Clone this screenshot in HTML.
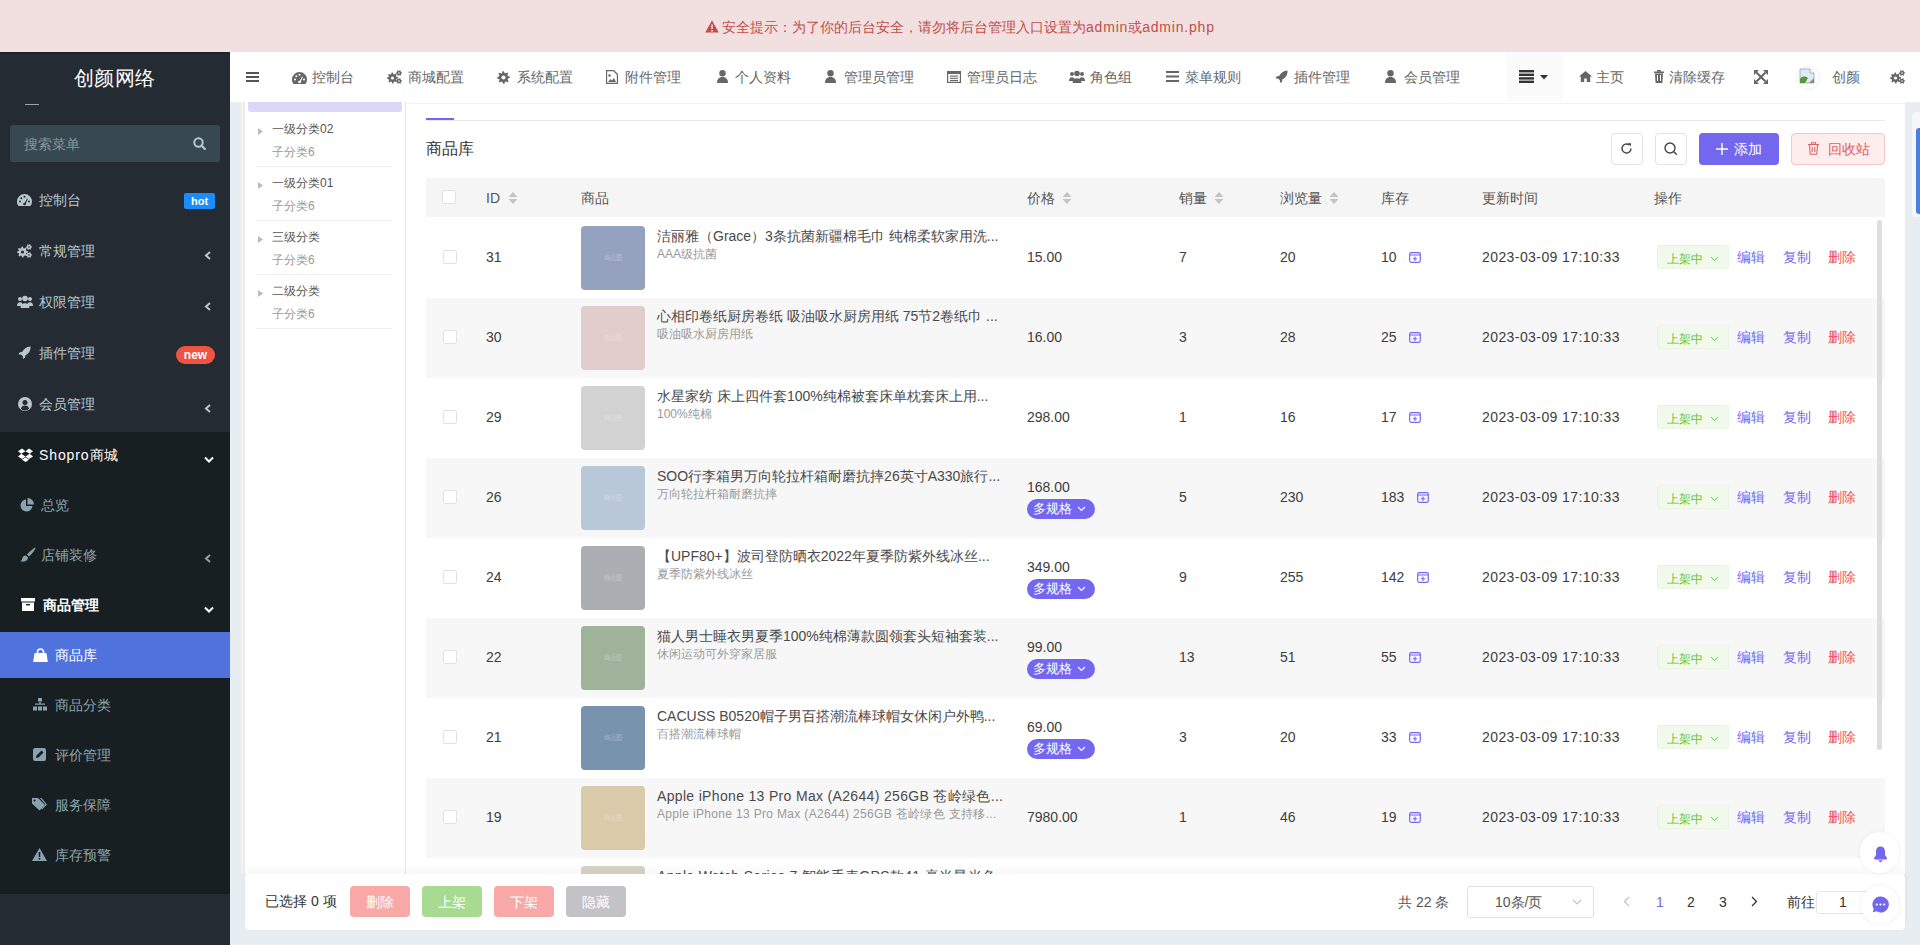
<!DOCTYPE html>
<html><head><meta charset="utf-8"><title>商品库</title>
<style>
*{box-sizing:border-box;margin:0;padding:0}
html,body{width:1920px;height:945px;overflow:hidden}
body{font-family:"Liberation Sans",sans-serif;font-size:14px;color:#333;background:#e8edf1;position:relative}
.abs{position:absolute}
.t{white-space:nowrap}
</style></head><body>
<div class="abs" style="left:0px;top:0px;width:1920px;height:52px;background:#f2dfdf"></div>
<svg class="abs" style="left:705px;top:20px;" width="14" height="13" viewBox="0 0 14 13" fill="#bf4f4d"><path d="M7 .5L13.8 12.5H.2z"/><rect x="6.2" y="4.5" width="1.6" height="4.5" fill="#f2dede"/><rect x="6.2" y="10" width="1.6" height="1.6" fill="#f2dede"/></svg>
<div class="abs t " style="left:722px;top:16.5px;line-height:20px;font-size:14px;color:#bf4f4d;">安全提示：为了你的后台安全，请勿将后台管理入口设置为<span style="letter-spacing:.8px">admin</span>或<span style="letter-spacing:.8px">admin.php</span></div>
<div class="abs" style="left:0px;top:52px;width:230px;height:893px;background:#252b32"></div>
<div class="abs" style="left:0px;top:52px;width:230px;height:2px;background:#1d2427"></div>
<div class="abs" style="left:0px;top:432px;width:230px;height:462px;background:#181f22"></div>
<div class="abs t " style="left:74px;top:65.0px;line-height:26px;font-size:20px;color:#fff;letter-spacing:0.3px">创颜网络</div>
<div class="abs" style="left:25px;top:104px;width:14px;height:1px;background:#9aa3a8"></div>
<div class="abs" style="left:10px;top:125px;width:210px;height:37px;background:#374850;border-radius:3px"></div>
<div class="abs t " style="left:24px;top:134.0px;line-height:20px;font-size:14px;color:#8a979d;">搜索菜单</div>
<svg class="abs" style="left:193px;top:137px" width="13" height="13" viewBox="0 0 13 13"><circle cx="5.5" cy="5.5" r="4.2" stroke="#b8c7ce" stroke-width="2" fill="none"/><path d="M8.5 8.5l3.5 3.5" stroke="#b8c7ce" stroke-width="2.2" stroke-linecap="round"/></svg>
<svg class="abs" style="left:17px;top:194px" width="15" height="12" viewBox="0 0 15 12"><path d="M7.5 0A7.5 7.5 0 0 0 0 7.5c0 1.7.6 3.3 1.6 4.5h11.8c1-1.2 1.6-2.8 1.6-4.5A7.5 7.5 0 0 0 7.5 0z" fill="#b8c7ce"/><circle cx="3" cy="7.5" r="1" fill="#252b32"/><circle cx="4.3" cy="4.2" r="1" fill="#252b32"/><circle cx="7.5" cy="2.8" r="1" fill="#252b32"/><circle cx="12" cy="7.5" r="1" fill="#252b32"/><path d="M7 10.5l3-6 .8.4-2.5 6.2z" fill="#252b32"/><circle cx="7.5" cy="10" r="1.3" fill="#252b32"/></svg>
<div class="abs t " style="left:39px;top:190.0px;line-height:20px;font-size:14px;color:#b8c7ce;">控制台</div>
<div class="abs" style="left:184px;top:193px;width:31px;height:16px;background:#1a8dfb;border-radius:2px"></div>
<div class="abs t " style="left:184px;top:192.5px;line-height:16px;font-size:11px;color:#fff;width:31px;text-align:center;font-weight:bold">hot</div>
<svg class="abs" style="left:17px;top:244px" width="15.0" height="14.0" viewBox="0 0 15 14"><path d="M10.94,7.19 L10.99,8.27 L9.34,8.96 L9.08,9.69 L9.92,11.28 L9.19,12.08 L7.54,11.40 L6.83,11.73 L6.31,13.44 L5.23,13.49 L4.54,11.84 L3.81,11.58 L2.22,12.42 L1.42,11.69 L2.10,10.04 L1.77,9.33 L0.06,8.81 L0.01,7.73 L1.66,7.04 L1.92,6.31 L1.08,4.72 L1.81,3.92 L3.46,4.60 L4.17,4.27 L4.69,2.56 L5.77,2.51 L6.46,4.16 L7.19,4.42 L8.78,3.58 L9.58,4.31 L8.90,5.96 L9.23,6.67Z" fill="#b8c7ce"/><circle cx="5.5" cy="8" r="1.6" fill="#252b32"/><path d="M14.94,2.41 L14.99,3.20 L14.05,3.69 L13.80,4.20 L13.98,5.26 L13.33,5.69 L12.42,5.12 L11.86,5.16 L11.04,5.84 L10.33,5.49 L10.38,4.42 L10.06,3.96 L9.06,3.59 L9.01,2.80 L9.95,2.31 L10.20,1.80 L10.02,0.74 L10.67,0.31 L11.58,0.88 L12.14,0.84 L12.96,0.16 L13.67,0.51 L13.62,1.58 L13.94,2.04Z" fill="#b8c7ce"/><circle cx="12" cy="3" r=".8" fill="#252b32"/><path d="M14.94,10.41 L14.99,11.20 L14.05,11.69 L13.80,12.20 L13.98,13.26 L13.33,13.69 L12.42,13.12 L11.86,13.16 L11.04,13.84 L10.33,13.49 L10.38,12.42 L10.06,11.96 L9.06,11.59 L9.01,10.80 L9.95,10.31 L10.20,9.80 L10.02,8.74 L10.67,8.31 L11.58,8.88 L12.14,8.84 L12.96,8.16 L13.67,8.51 L13.62,9.58 L13.94,10.04Z" fill="#b8c7ce"/><circle cx="12" cy="11" r=".8" fill="#252b32"/></svg>
<div class="abs t " style="left:39px;top:241.0px;line-height:20px;font-size:14px;color:#b8c7ce;">常规管理</div>
<svg class="abs" style="left:204px;top:250.5px" width="8" height="9" viewBox="0 0 8 9"><path d="M6 1L2 4.5 6 8" stroke="#b8c7ce" stroke-width="2" fill="none"/></svg>
<svg class="abs" style="left:17px;top:295px" width="16" height="13" viewBox="0 0 16 13"><circle cx="8" cy="3.5" r="2.8" fill="#b8c7ce"/><circle cx="3" cy="4" r="2" fill="#b8c7ce"/><circle cx="13" cy="4" r="2" fill="#b8c7ce"/><path d="M3.5 13c0-3 2-4.8 4.5-4.8s4.5 1.8 4.5 4.8z" fill="#b8c7ce"/><path d="M0 11c0-2.5 1.2-3.8 3-3.8s3 1.3 3 3.8z" fill="#b8c7ce"/><path d="M10 11c0-2.5 1.2-3.8 3-3.8s3 1.3 3 3.8z" fill="#b8c7ce"/></svg>
<div class="abs t " style="left:39px;top:292.0px;line-height:20px;font-size:14px;color:#b8c7ce;">权限管理</div>
<svg class="abs" style="left:204px;top:301.5px" width="8" height="9" viewBox="0 0 8 9"><path d="M6 1L2 4.5 6 8" stroke="#b8c7ce" stroke-width="2" fill="none"/></svg>
<svg class="abs" style="left:18px;top:346px" width="13" height="13" viewBox="0 0 14 14"><path d="M13.5.5C9 .8 6 3.5 4.5 6.5L2 6.8.5 9l3 .3 1.7 1.7.3 3 2.2-1.5.3-2.5C11 8.5 13.7 5.5 13.5.5z" fill="#b8c7ce"/></svg>
<div class="abs t " style="left:39px;top:343.0px;line-height:20px;font-size:14px;color:#b8c7ce;">插件管理</div>
<div class="abs" style="left:176px;top:346px;width:39px;height:18px;background:#f0533f;border-radius:9px"></div>
<div class="abs t " style="left:176px;top:346.0px;line-height:18px;font-size:12px;color:#fff;width:39px;text-align:center;font-weight:bold">new</div>
<svg class="abs" style="left:18px;top:397px" width="14" height="14" viewBox="0 0 14 14"><circle cx="7" cy="7" r="7" fill="#b8c7ce"/><circle cx="7" cy="5.5" r="2.5" fill="#252b32"/><path d="M2.8 11.5c.8-2 2.3-3 4.2-3s3.4 1 4.2 3A5.5 5.5 0 0 1 2.8 11.5z" fill="#252b32"/></svg>
<div class="abs t " style="left:39px;top:394.0px;line-height:20px;font-size:14px;color:#b8c7ce;">会员管理</div>
<svg class="abs" style="left:204px;top:403.5px" width="8" height="9" viewBox="0 0 8 9"><path d="M6 1L2 4.5 6 8" stroke="#b8c7ce" stroke-width="2" fill="none"/></svg>
<svg class="abs" style="left:18px;top:448px" width="15" height="14" viewBox="0 0 15 14"><path d="M4 .5L0 3.2l3.3 2.6L7.5 3.2zM11 .5l4 2.7-3.3 2.6L7.5 3.2zM0 8.4l4 2.6 3.5-2.6-4.2-2.6zM15 8.4l-4 2.6-3.5-2.6 4.2-2.6zM4 11.8l3.5 2.2 3.5-2.2-3.5-2.5z" fill="#fff"/></svg>
<div class="abs t " style="left:39px;top:445.0px;line-height:20px;font-size:14px;color:#fff;"><span style="letter-spacing:.9px">Shopro</span>商城</div>
<svg class="abs" style="left:204px;top:456px" width="10" height="7" viewBox="0 0 10 7"><path d="M1 1.5l4 4 4-4" stroke="#fff" stroke-width="2" fill="none"/></svg>
<svg class="abs" style="left:20px;top:498px" width="14" height="14" viewBox="0 0 14 14"><path d="M6 1.5A6 6 0 1 0 12.5 8H6z" fill="#8aa4af"/><path d="M7.5 0v6.5H14A6.5 6.5 0 0 0 7.5 0z" fill="#8aa4af"/></svg>
<div class="abs t " style="left:41px;top:495.0px;line-height:20px;font-size:14px;color:#8aa4af;">总览</div>
<svg class="abs" style="left:20px;top:547px" width="16" height="15" viewBox="0 0 16 15"><path d="M15.5.5c-1.5.2-6.5 4.5-8.5 7l2 2c2.5-2 6.5-7 6.5-9z" fill="#8aa4af"/><path d="M6 8.5c-2.5 0-3.5 1.5-3.8 3.2C2 13 1.2 13.8.3 14.3c3 .8 7.2.2 7.7-3.8z" fill="#8aa4af"/></svg>
<div class="abs t " style="left:41px;top:545.0px;line-height:20px;font-size:14px;color:#8aa4af;">店铺装修</div>
<svg class="abs" style="left:204px;top:553.5px" width="8" height="9" viewBox="0 0 8 9"><path d="M6 1L2 4.5 6 8" stroke="#8aa4af" stroke-width="2" fill="none"/></svg>
<svg class="abs" style="left:21px;top:598px" width="14" height="13" viewBox="0 0 14 13"><rect x="0" y="0" width="14" height="3.5" fill="#fff"/><rect x="1" y="4.5" width="12" height="8.5" fill="#fff"/><rect x="5" y="6" width="4" height="1.4" fill="#1a2226"/></svg>
<div class="abs t " style="left:43px;top:595.0px;line-height:20px;font-size:14px;color:#fff;font-weight:bold">商品管理</div>
<svg class="abs" style="left:204px;top:606px" width="10" height="7" viewBox="0 0 10 7"><path d="M1 1.5l4 4 4-4" stroke="#fff" stroke-width="2" fill="none"/></svg>
<div class="abs" style="left:0px;top:632px;width:230px;height:46px;background:#4f72dd"></div>
<svg class="abs" style="left:33px;top:648px" width="15" height="14" viewBox="0 0 15 14"><path d="M1.5 5h12l1.3 9H.2z" fill="#fff"/><path d="M4.5 6V4a3 3 0 0 1 6 0v2" stroke="#fff" stroke-width="1.6" fill="none"/></svg>
<div class="abs t " style="left:55px;top:645.0px;line-height:20px;font-size:14px;color:#fff;">商品库</div>
<svg class="abs" style="left:33px;top:698px" width="14" height="13" viewBox="0 0 14 13"><rect x="5" y="0" width="4" height="3.5" fill="#8aa4af"/><rect x="6.4" y="3.5" width="1.2" height="2.5" fill="#8aa4af"/><rect x="2" y="5.5" width="10" height="1.2" fill="#8aa4af"/><rect x="0" y="8.5" width="4" height="4" fill="#8aa4af"/><rect x="5" y="8.5" width="4" height="4" fill="#8aa4af"/><rect x="10" y="8.5" width="4" height="4" fill="#8aa4af"/></svg>
<div class="abs t " style="left:55px;top:695.0px;line-height:20px;font-size:14px;color:#8aa4af;">商品分类</div>
<svg class="abs" style="left:33px;top:748px" width="13" height="13" viewBox="0 0 13 13"><rect x="0" y="0" width="13" height="13" rx="2" fill="#8aa4af"/><path d="M3 10l.5-2.5L8.5 2.5 10.5 4.5 5.5 9.5z" fill="#181f22"/></svg>
<div class="abs t " style="left:55px;top:745.0px;line-height:20px;font-size:14px;color:#8aa4af;">评价管理</div>
<svg class="abs" style="left:32px;top:798px" width="15" height="13" viewBox="0 0 15 13"><path d="M0 0h6l7 7-5.5 5.5L0 5.5z" fill="#8aa4af"/><circle cx="2.5" cy="2.5" r="1.1" fill="#181f22"/><path d="M8 0h1.5l5.5 6.5-5 5-.8-.8L13.5 6.5z" fill="#8aa4af"/></svg>
<div class="abs t " style="left:55px;top:795.0px;line-height:20px;font-size:14px;color:#8aa4af;">服务保障</div>
<svg class="abs" style="left:32px;top:848px" width="15" height="13" viewBox="0 0 15 13"><path d="M7.5 0L15 13H0z" fill="#8aa4af"/><rect x="6.7" y="4" width="1.6" height="5" fill="#181f22"/><rect x="6.7" y="10" width="1.6" height="1.6" fill="#181f22"/></svg>
<div class="abs t " style="left:55px;top:845.0px;line-height:20px;font-size:14px;color:#8aa4af;">库存预警</div>
<div class="abs" style="left:230px;top:52px;width:1690px;height:50px;background:#fff"></div>
<svg class="abs" style="left:246px;top:72px;" width="13" height="10" viewBox="0 0 13 10" fill="#555"><rect x="0" y="0" width="13" height="2"/><rect x="0" y="4" width="13" height="2"/><rect x="0" y="8" width="13" height="2"/></svg>
<svg class="abs" style="left:292px;top:72px" width="15" height="12" viewBox="0 0 15 12"><path d="M7.5 0A7.5 7.5 0 0 0 0 7.5c0 1.7.6 3.3 1.6 4.5h11.8c1-1.2 1.6-2.8 1.6-4.5A7.5 7.5 0 0 0 7.5 0z" fill="#666"/><circle cx="3" cy="7.5" r="1" fill="#fff"/><circle cx="4.3" cy="4.2" r="1" fill="#fff"/><circle cx="7.5" cy="2.8" r="1" fill="#fff"/><circle cx="12" cy="7.5" r="1" fill="#fff"/><path d="M7 10.5l3-6 .8.4-2.5 6.2z" fill="#fff"/><circle cx="7.5" cy="10" r="1.3" fill="#fff"/></svg>
<div class="abs t " style="left:312px;top:67.0px;line-height:20px;font-size:14px;color:#666;">控制台</div>
<svg class="abs" style="left:387px;top:70px" width="15.0" height="14.0" viewBox="0 0 15 14"><path d="M10.94,7.19 L10.99,8.27 L9.34,8.96 L9.08,9.69 L9.92,11.28 L9.19,12.08 L7.54,11.40 L6.83,11.73 L6.31,13.44 L5.23,13.49 L4.54,11.84 L3.81,11.58 L2.22,12.42 L1.42,11.69 L2.10,10.04 L1.77,9.33 L0.06,8.81 L0.01,7.73 L1.66,7.04 L1.92,6.31 L1.08,4.72 L1.81,3.92 L3.46,4.60 L4.17,4.27 L4.69,2.56 L5.77,2.51 L6.46,4.16 L7.19,4.42 L8.78,3.58 L9.58,4.31 L8.90,5.96 L9.23,6.67Z" fill="#666"/><circle cx="5.5" cy="8" r="1.6" fill="#fff"/><path d="M14.94,2.41 L14.99,3.20 L14.05,3.69 L13.80,4.20 L13.98,5.26 L13.33,5.69 L12.42,5.12 L11.86,5.16 L11.04,5.84 L10.33,5.49 L10.38,4.42 L10.06,3.96 L9.06,3.59 L9.01,2.80 L9.95,2.31 L10.20,1.80 L10.02,0.74 L10.67,0.31 L11.58,0.88 L12.14,0.84 L12.96,0.16 L13.67,0.51 L13.62,1.58 L13.94,2.04Z" fill="#666"/><circle cx="12" cy="3" r=".8" fill="#fff"/><path d="M14.94,10.41 L14.99,11.20 L14.05,11.69 L13.80,12.20 L13.98,13.26 L13.33,13.69 L12.42,13.12 L11.86,13.16 L11.04,13.84 L10.33,13.49 L10.38,12.42 L10.06,11.96 L9.06,11.59 L9.01,10.80 L9.95,10.31 L10.20,9.80 L10.02,8.74 L10.67,8.31 L11.58,8.88 L12.14,8.84 L12.96,8.16 L13.67,8.51 L13.62,9.58 L13.94,10.04Z" fill="#666"/><circle cx="12" cy="11" r=".8" fill="#fff"/></svg>
<div class="abs t " style="left:408px;top:67.0px;line-height:20px;font-size:14px;color:#666;">商城配置</div>
<svg class="abs" style="left:497px;top:71px" width="13" height="13" viewBox="0 0 14 14"><path d="M13.73,6.00 L13.79,7.33 L11.75,8.19 L11.43,9.09 L12.46,11.05 L11.57,12.04 L9.52,11.20 L8.65,11.61 L8.00,13.73 L6.67,13.79 L5.81,11.75 L4.91,11.43 L2.95,12.46 L1.96,11.57 L2.80,9.52 L2.39,8.65 L0.27,8.00 L0.21,6.67 L2.25,5.81 L2.57,4.91 L1.54,2.95 L2.43,1.96 L4.48,2.80 L5.35,2.39 L6.00,0.27 L7.33,0.21 L8.19,2.25 L9.09,2.57 L11.05,1.54 L12.04,2.43 L11.20,4.48 L11.61,5.35Z" fill="#666"/><circle cx="7" cy="7" r="2.2" fill="#fff"/></svg>
<div class="abs t " style="left:517px;top:67.0px;line-height:20px;font-size:14px;color:#666;">系统配置</div>
<svg class="abs" style="left:606px;top:70px" width="12" height="14" viewBox="0 0 12 14"><path d="M.5.5h7l4 4v9H.5z" fill="none" stroke="#666" stroke-width="1.3"/><path d="M2 12l2.5-3 1.5 1.5 2-2.5 2 4z" fill="#666"/><circle cx="3.5" cy="5.5" r="1.2" fill="#666"/></svg>
<div class="abs t " style="left:625px;top:67.0px;line-height:20px;font-size:14px;color:#666;">附件管理</div>
<svg class="abs" style="left:717px;top:70px" width="11" height="13" viewBox="0 0 11 13"><circle cx="5.5" cy="3.3" r="3.2" fill="#666"/><path d="M0 13c0-3.6 1.8-6 5.5-6S11 9.4 11 13z" fill="#666"/></svg>
<div class="abs t " style="left:735px;top:67.0px;line-height:20px;font-size:14px;color:#666;">个人资料</div>
<svg class="abs" style="left:825px;top:70px" width="11" height="13" viewBox="0 0 11 13"><circle cx="5.5" cy="3.3" r="3.2" fill="#666"/><path d="M0 13c0-3.6 1.8-6 5.5-6S11 9.4 11 13z" fill="#666"/></svg>
<div class="abs t " style="left:844px;top:67.0px;line-height:20px;font-size:14px;color:#666;">管理员管理</div>
<svg class="abs" style="left:947px;top:71px" width="14" height="12" viewBox="0 0 14 12"><rect x=".6" y=".6" width="12.8" height="10.8" fill="none" stroke="#666" stroke-width="1.2"/><rect x="1" y="1" width="12" height="2" fill="#666"/><rect x="3" y="4.5" width="8" height="1.1" fill="#666"/><rect x="3" y="6.7" width="8" height="1.1" fill="#666"/><rect x="3" y="8.9" width="8" height="1.1" fill="#666"/></svg>
<div class="abs t " style="left:967px;top:67.0px;line-height:20px;font-size:14px;color:#666;">管理员日志</div>
<svg class="abs" style="left:1069px;top:70px" width="16" height="13" viewBox="0 0 16 13"><circle cx="8" cy="3.5" r="2.8" fill="#666"/><circle cx="3" cy="4" r="2" fill="#666"/><circle cx="13" cy="4" r="2" fill="#666"/><path d="M3.5 13c0-3 2-4.8 4.5-4.8s4.5 1.8 4.5 4.8z" fill="#666"/><path d="M0 11c0-2.5 1.2-3.8 3-3.8s3 1.3 3 3.8z" fill="#666"/><path d="M10 11c0-2.5 1.2-3.8 3-3.8s3 1.3 3 3.8z" fill="#666"/></svg>
<div class="abs t " style="left:1090px;top:67.0px;line-height:20px;font-size:14px;color:#666;">角色组</div>
<svg class="abs" style="left:1166px;top:71px;" width="13" height="11" viewBox="0 0 13 11" fill="#666"><rect x="0" y="0" width="13" height="2"/><rect x="0" y="4.5" width="13" height="2"/><rect x="0" y="9" width="13" height="2"/></svg>
<div class="abs t " style="left:1185px;top:67.0px;line-height:20px;font-size:14px;color:#666;">菜单规则</div>
<svg class="abs" style="left:1275px;top:70px" width="13" height="13" viewBox="0 0 14 14"><path d="M13.5.5C9 .8 6 3.5 4.5 6.5L2 6.8.5 9l3 .3 1.7 1.7.3 3 2.2-1.5.3-2.5C11 8.5 13.7 5.5 13.5.5z" fill="#666"/></svg>
<div class="abs t " style="left:1294px;top:67.0px;line-height:20px;font-size:14px;color:#666;">插件管理</div>
<svg class="abs" style="left:1385px;top:70px" width="11" height="13" viewBox="0 0 11 13"><circle cx="5.5" cy="3.3" r="3.2" fill="#666"/><path d="M0 13c0-3.6 1.8-6 5.5-6S11 9.4 11 13z" fill="#666"/></svg>
<div class="abs t " style="left:1404px;top:67.0px;line-height:20px;font-size:14px;color:#666;">会员管理</div>
<div class="abs" style="left:1507px;top:53px;width:56px;height:47px;background:#fbfbfb"></div>
<svg class="abs" style="left:1519px;top:70px;" width="15" height="13" viewBox="0 0 15 13" fill="#333"><rect x="0" y="0" width="15" height="2.4"/><rect x="0" y="3.6" width="15" height="2.4"/><rect x="0" y="7.2" width="15" height="2.4"/><rect x="0" y="10.6" width="15" height="2.4"/></svg>
<svg class="abs" style="left:1540px;top:75px;" width="8" height="5" viewBox="0 0 8 5" fill="#333"><path d="M0 0h8L4 4.5z"/></svg>
<svg class="abs" style="left:1579px;top:71px" width="13" height="11" viewBox="0 0 13 11"><path d="M6.5 0L0 5.5h1.8V11h3.4V7.5h2.6V11h3.4V5.5H13z" fill="#666"/></svg>
<div class="abs t " style="left:1596px;top:67.0px;line-height:20px;font-size:14px;color:#666;">主页</div>
<svg class="abs" style="left:1654px;top:70px" width="10" height="13" viewBox="0 0 10 13"><rect x="0" y="1.5" width="10" height="1.6" fill="#666"/><rect x="3" y="0" width="4" height="1.6" fill="#666"/><path d="M1 3.5h8l-.6 9.5H1.6z" fill="#666"/><rect x="3" y="5" width="1" height="6" fill="#fff"/><rect x="6" y="5" width="1" height="6" fill="#fff"/></svg>
<div class="abs t " style="left:1669px;top:67.0px;line-height:20px;font-size:14px;color:#666;">清除缓存</div>
<svg class="abs" style="left:1754px;top:70px" width="14" height="14" viewBox="0 0 14 14"><path d="M2.5 2.5l9 9M11.5 2.5l-9 9" stroke="#666" stroke-width="2"/><path d="M0 0h5L0 5zM14 0v5L9 0zM0 14V9l5 5zM14 14H9l5-5z" fill="#666"/></svg>
<div class="abs" style="left:1796px;top:66px;width:24px;height:24px;border-radius:50%;border:1px solid #f0f0f0"></div>
<svg class="abs" style="left:1799px;top:68px" width="16" height="16" viewBox="0 0 16 16"><path d="M1 1h10l4 4v10H1z" fill="#dfe9f5" stroke="#9aa5b0" stroke-width=".8"/><path d="M1 15V11c2-3 5-3 8-1l-3 5z" fill="#4f9a3a"/><path d="M11 1v4h4" fill="#fff" stroke="#9aa5b0" stroke-width=".8"/><path d="M10 15l5-5v5z" fill="#888"/></svg>
<div class="abs t " style="left:1832px;top:67.0px;line-height:20px;font-size:14px;color:#666;">创颜</div>
<svg class="abs" style="left:1890px;top:70px" width="15.0" height="14.0" viewBox="0 0 15 14"><path d="M10.94,7.19 L10.99,8.27 L9.34,8.96 L9.08,9.69 L9.92,11.28 L9.19,12.08 L7.54,11.40 L6.83,11.73 L6.31,13.44 L5.23,13.49 L4.54,11.84 L3.81,11.58 L2.22,12.42 L1.42,11.69 L2.10,10.04 L1.77,9.33 L0.06,8.81 L0.01,7.73 L1.66,7.04 L1.92,6.31 L1.08,4.72 L1.81,3.92 L3.46,4.60 L4.17,4.27 L4.69,2.56 L5.77,2.51 L6.46,4.16 L7.19,4.42 L8.78,3.58 L9.58,4.31 L8.90,5.96 L9.23,6.67Z" fill="#666"/><circle cx="5.5" cy="8" r="1.6" fill="#fff"/><path d="M14.94,2.41 L14.99,3.20 L14.05,3.69 L13.80,4.20 L13.98,5.26 L13.33,5.69 L12.42,5.12 L11.86,5.16 L11.04,5.84 L10.33,5.49 L10.38,4.42 L10.06,3.96 L9.06,3.59 L9.01,2.80 L9.95,2.31 L10.20,1.80 L10.02,0.74 L10.67,0.31 L11.58,0.88 L12.14,0.84 L12.96,0.16 L13.67,0.51 L13.62,1.58 L13.94,2.04Z" fill="#666"/><circle cx="12" cy="3" r=".8" fill="#fff"/><path d="M14.94,10.41 L14.99,11.20 L14.05,11.69 L13.80,12.20 L13.98,13.26 L13.33,13.69 L12.42,13.12 L11.86,13.16 L11.04,13.84 L10.33,13.49 L10.38,12.42 L10.06,11.96 L9.06,11.59 L9.01,10.80 L9.95,10.31 L10.20,9.80 L10.02,8.74 L10.67,8.31 L11.58,8.88 L12.14,8.84 L12.96,8.16 L13.67,8.51 L13.62,9.58 L13.94,10.04Z" fill="#666"/><circle cx="12" cy="11" r=".8" fill="#fff"/></svg>
<div class="abs" style="left:230px;top:102px;width:1690px;height:843px;background:#e8edf1"></div>
<div class="abs" style="left:245px;top:102px;width:1660px;height:772px;background:#fff"></div>
<div class="abs" style="left:405px;top:102px;width:1px;height:772px;background:#e6e6e6"></div>
<div class="abs" style="left:406px;top:103px;width:1499px;height:1px;background:#f3f3f3"></div>
<div class="abs" style="left:240px;top:102px;width:5px;height:772px;background:linear-gradient(90deg,#eaebed 0,#eaebed 20%,#f3f3f3 30%,#f3f3f3 55%,#ececec 65%,#ececec 90%,#f8f8f8 100%)"></div>
<div class="abs" style="left:248px;top:102px;width:154px;height:10px;background:#dcd7f9;border-radius:0 0 3px 3px"></div>
<svg class="abs" style="left:258px;top:128px;" width="5" height="7" viewBox="0 0 5 7" fill="#bbb"><path d="M0 0l5 3.5L0 7z"/></svg>
<div class="abs t " style="left:272px;top:120.0px;line-height:18px;font-size:12px;color:#555;">一级分类02</div>
<div class="abs t " style="left:272px;top:143.0px;line-height:18px;font-size:12px;color:#999;">子分类6</div>
<div class="abs" style="left:256px;top:166px;width:136px;height:1px;background:#eee"></div>
<svg class="abs" style="left:258px;top:182px;" width="5" height="7" viewBox="0 0 5 7" fill="#bbb"><path d="M0 0l5 3.5L0 7z"/></svg>
<div class="abs t " style="left:272px;top:174.0px;line-height:18px;font-size:12px;color:#555;">一级分类01</div>
<div class="abs t " style="left:272px;top:197.0px;line-height:18px;font-size:12px;color:#999;">子分类6</div>
<div class="abs" style="left:256px;top:220px;width:136px;height:1px;background:#eee"></div>
<svg class="abs" style="left:258px;top:236px;" width="5" height="7" viewBox="0 0 5 7" fill="#bbb"><path d="M0 0l5 3.5L0 7z"/></svg>
<div class="abs t " style="left:272px;top:228.0px;line-height:18px;font-size:12px;color:#555;">三级分类</div>
<div class="abs t " style="left:272px;top:251.0px;line-height:18px;font-size:12px;color:#999;">子分类6</div>
<div class="abs" style="left:256px;top:274px;width:136px;height:1px;background:#eee"></div>
<svg class="abs" style="left:258px;top:290px;" width="5" height="7" viewBox="0 0 5 7" fill="#bbb"><path d="M0 0l5 3.5L0 7z"/></svg>
<div class="abs t " style="left:272px;top:282.0px;line-height:18px;font-size:12px;color:#555;">二级分类</div>
<div class="abs t " style="left:272px;top:305.0px;line-height:18px;font-size:12px;color:#999;">子分类6</div>
<div class="abs" style="left:256px;top:328px;width:136px;height:1px;background:#eee"></div>
<div class="abs" style="left:426px;top:120px;width:1459px;height:1px;background:#e9e9e9"></div>
<div class="abs" style="left:426px;top:118px;width:28px;height:2px;background:#7367f0"></div>
<div class="abs t " style="left:426px;top:138.0px;line-height:22px;font-size:16px;color:#333;">商品库</div>
<div class="abs" style="left:1611px;top:133px;width:32px;height:32px;border:1px solid #e3e3e3;border-radius:4px;background:#fff"></div>
<svg class="abs" style="left:1620px;top:142px" width="13" height="13" viewBox="0 0 13 13"><path d="M11 6.5A4.5 4.5 0 1 1 9.2 2.9" stroke="#444" stroke-width="1.4" fill="none"/><path d="M8 .8l3.2.6-.6 3.2z" fill="#444"/></svg>
<div class="abs" style="left:1655px;top:133px;width:32px;height:32px;border:1px solid #e3e3e3;border-radius:4px;background:#fff"></div>
<svg class="abs" style="left:1664px;top:142px" width="14" height="14" viewBox="0 0 14 14"><circle cx="6" cy="6" r="5" stroke="#444" stroke-width="1.4" fill="none"/><path d="M9.8 9.8l3 3" stroke="#444" stroke-width="1.4"/></svg>
<div class="abs" style="left:1699px;top:133px;width:80px;height:32px;background:#7367f0;border-radius:4px"></div>
<svg class="abs" style="left:1716px;top:143px" width="12" height="12" viewBox="0 0 12 12"><path d="M6 0v12M0 6h12" stroke="#fff" stroke-width="1.4"/></svg>
<div class="abs t " style="left:1734px;top:139.0px;line-height:20px;font-size:14px;color:#fff;">添加</div>
<div class="abs" style="left:1791px;top:133px;width:94px;height:32px;background:#fdeded;border:1px solid #f6c5c5;border-radius:4px"></div>
<svg class="abs" style="left:1808px;top:142px" width="11" height="13" viewBox="0 0 11 13"><path d="M0 2.5h11M3.5 2.5V.7h4v1.8M1.5 2.5l.7 9.8h6.6l.7-9.8M4.2 5v5M6.8 5v5" stroke="#e06060" stroke-width="1.1" fill="none"/></svg>
<div class="abs t " style="left:1828px;top:139.0px;line-height:20px;font-size:14px;color:#e06060;">回收站</div>
<div class="abs" style="left:426px;top:178px;width:1459px;height:39px;background:#f5f5f5"></div>
<div class="abs" style="left:442px;top:190px;width:14px;height:14px;border:1px solid #e2e2e2;border-radius:2px;background:#fff"></div>
<div class="abs t " style="left:486px;top:188.0px;line-height:20px;font-size:14px;color:#555;">ID</div>
<svg class="abs" style="left:508px;top:192px" width="10" height="12" viewBox="0 0 10 12"><path d="M5 0L9.5 5h-9z" fill="#c4c4c4"/><path d="M5 12L9.5 7h-9z" fill="#c4c4c4"/></svg>
<div class="abs t " style="left:581px;top:188.0px;line-height:20px;font-size:14px;color:#555;">商品</div>
<div class="abs t " style="left:1027px;top:188.0px;line-height:20px;font-size:14px;color:#555;">价格</div>
<svg class="abs" style="left:1062px;top:192px" width="10" height="12" viewBox="0 0 10 12"><path d="M5 0L9.5 5h-9z" fill="#c4c4c4"/><path d="M5 12L9.5 7h-9z" fill="#c4c4c4"/></svg>
<div class="abs t " style="left:1179px;top:188.0px;line-height:20px;font-size:14px;color:#555;">销量</div>
<svg class="abs" style="left:1214px;top:192px" width="10" height="12" viewBox="0 0 10 12"><path d="M5 0L9.5 5h-9z" fill="#c4c4c4"/><path d="M5 12L9.5 7h-9z" fill="#c4c4c4"/></svg>
<div class="abs t " style="left:1280px;top:188.0px;line-height:20px;font-size:14px;color:#555;">浏览量</div>
<svg class="abs" style="left:1329px;top:192px" width="10" height="12" viewBox="0 0 10 12"><path d="M5 0L9.5 5h-9z" fill="#c4c4c4"/><path d="M5 12L9.5 7h-9z" fill="#c4c4c4"/></svg>
<div class="abs t " style="left:1381px;top:188.0px;line-height:20px;font-size:14px;color:#555;">库存</div>
<div class="abs t " style="left:1482px;top:188.0px;line-height:20px;font-size:14px;color:#555;">更新时间</div>
<div class="abs t " style="left:1654px;top:188.0px;line-height:20px;font-size:14px;color:#555;">操作</div>
<div class="abs" style="left:581px;top:226px;width:64px;height:64px;border-radius:4px;background:#95a2bf"><div style="position:absolute;left:0;top:28px;width:64px;text-align:center;font-size:7px;line-height:8px;color:rgba(255,255,255,.35);transform:scaleX(.9)">商品图</div></div>
<div class="abs" style="left:443px;top:250px;width:14px;height:14px;border:1px solid #e2e2e2;border-radius:2px;background:#fff"></div>
<div class="abs t " style="left:486px;top:247.0px;line-height:20px;font-size:14px;color:#3d3d3d;">31</div>
<div class="abs t " style="left:657px;top:226.0px;line-height:20px;font-size:14px;color:#4a4a4a;white-space:nowrap;">洁丽雅（Grace）3条抗菌新疆棉毛巾 纯棉柔软家用洗...</div>
<div class="abs t " style="left:657px;top:245.0px;line-height:18px;font-size:12px;color:#999;white-space:nowrap;">AAA级抗菌</div>
<div class="abs t " style="left:1027px;top:247.0px;line-height:20px;font-size:14px;color:#3d3d3d;">15.00</div>
<div class="abs t " style="left:1179px;top:247.0px;line-height:20px;font-size:14px;color:#3d3d3d;">7</div>
<div class="abs t " style="left:1280px;top:247.0px;line-height:20px;font-size:14px;color:#3d3d3d;">20</div>
<div class="abs t " style="left:1381px;top:247.0px;line-height:20px;font-size:14px;color:#3d3d3d;">10</div>
<svg class="abs" style="left:1409px;top:251px" width="12" height="12" viewBox="0 0 12 12"><rect x=".7" y="1.7" width="10.6" height="9.6" rx="1.5" fill="none" stroke="#7367f0" stroke-width="1.2"/><path d="M.7 4h10.6M6 5.5v4.5M3.8 7.8h4.4" stroke="#7367f0" stroke-width="1.1"/></svg>
<div class="abs t " style="left:1482px;top:247.0px;line-height:20px;font-size:14px;color:#3d3d3d;letter-spacing:.42px">2023-03-09 17:10:33</div>
<div class="abs" style="left:1657px;top:245px;width:72px;height:24px;background:#f0f9eb;border:1px solid #e8f5e0;border-radius:3px"></div>
<div class="abs t " style="left:1667px;top:249.5px;line-height:18px;font-size:12px;color:#67c23a;">上架中</div>
<svg class="abs" style="left:1710px;top:256px" width="9" height="6" viewBox="0 0 9 6"><path d="M1 1l3.5 3.5L8 1" stroke="#67c23a" stroke-width="1" fill="none"/></svg>
<div class="abs t " style="left:1737px;top:247.0px;line-height:20px;font-size:14px;color:#7367f0;">编辑</div>
<div class="abs t " style="left:1783px;top:247.0px;line-height:20px;font-size:14px;color:#7367f0;">复制</div>
<div class="abs t " style="left:1828px;top:247.0px;line-height:20px;font-size:14px;color:#ea5455;">删除</div>
<div class="abs" style="left:426px;top:298px;width:1459px;height:80px;background:#f7f7f7"></div>
<div class="abs" style="left:581px;top:306px;width:64px;height:64px;border-radius:4px;background:#e0cdcc"><div style="position:absolute;left:0;top:28px;width:64px;text-align:center;font-size:7px;line-height:8px;color:rgba(255,255,255,.35);transform:scaleX(.9)">商品图</div></div>
<div class="abs" style="left:443px;top:330px;width:14px;height:14px;border:1px solid #e2e2e2;border-radius:2px;background:#fff"></div>
<div class="abs t " style="left:486px;top:327.0px;line-height:20px;font-size:14px;color:#3d3d3d;">30</div>
<div class="abs t " style="left:657px;top:306.0px;line-height:20px;font-size:14px;color:#4a4a4a;white-space:nowrap;">心相印卷纸厨房卷纸 吸油吸水厨房用纸 75节2卷纸巾 ...</div>
<div class="abs t " style="left:657px;top:325.0px;line-height:18px;font-size:12px;color:#999;white-space:nowrap;">吸油吸水厨房用纸</div>
<div class="abs t " style="left:1027px;top:327.0px;line-height:20px;font-size:14px;color:#3d3d3d;">16.00</div>
<div class="abs t " style="left:1179px;top:327.0px;line-height:20px;font-size:14px;color:#3d3d3d;">3</div>
<div class="abs t " style="left:1280px;top:327.0px;line-height:20px;font-size:14px;color:#3d3d3d;">28</div>
<div class="abs t " style="left:1381px;top:327.0px;line-height:20px;font-size:14px;color:#3d3d3d;">25</div>
<svg class="abs" style="left:1409px;top:331px" width="12" height="12" viewBox="0 0 12 12"><rect x=".7" y="1.7" width="10.6" height="9.6" rx="1.5" fill="none" stroke="#7367f0" stroke-width="1.2"/><path d="M.7 4h10.6M6 5.5v4.5M3.8 7.8h4.4" stroke="#7367f0" stroke-width="1.1"/></svg>
<div class="abs t " style="left:1482px;top:327.0px;line-height:20px;font-size:14px;color:#3d3d3d;letter-spacing:.42px">2023-03-09 17:10:33</div>
<div class="abs" style="left:1657px;top:325px;width:72px;height:24px;background:#f0f9eb;border:1px solid #e8f5e0;border-radius:3px"></div>
<div class="abs t " style="left:1667px;top:329.5px;line-height:18px;font-size:12px;color:#67c23a;">上架中</div>
<svg class="abs" style="left:1710px;top:336px" width="9" height="6" viewBox="0 0 9 6"><path d="M1 1l3.5 3.5L8 1" stroke="#67c23a" stroke-width="1" fill="none"/></svg>
<div class="abs t " style="left:1737px;top:327.0px;line-height:20px;font-size:14px;color:#7367f0;">编辑</div>
<div class="abs t " style="left:1783px;top:327.0px;line-height:20px;font-size:14px;color:#7367f0;">复制</div>
<div class="abs t " style="left:1828px;top:327.0px;line-height:20px;font-size:14px;color:#ea5455;">删除</div>
<div class="abs" style="left:581px;top:386px;width:64px;height:64px;border-radius:4px;background:#d2d2d2"><div style="position:absolute;left:0;top:28px;width:64px;text-align:center;font-size:7px;line-height:8px;color:rgba(255,255,255,.35);transform:scaleX(.9)">商品图</div></div>
<div class="abs" style="left:443px;top:410px;width:14px;height:14px;border:1px solid #e2e2e2;border-radius:2px;background:#fff"></div>
<div class="abs t " style="left:486px;top:407.0px;line-height:20px;font-size:14px;color:#3d3d3d;">29</div>
<div class="abs t " style="left:657px;top:386.0px;line-height:20px;font-size:14px;color:#4a4a4a;white-space:nowrap;">水星家纺 床上四件套100%纯棉被套床单枕套床上用...</div>
<div class="abs t " style="left:657px;top:405.0px;line-height:18px;font-size:12px;color:#999;white-space:nowrap;">100%纯棉</div>
<div class="abs t " style="left:1027px;top:407.0px;line-height:20px;font-size:14px;color:#3d3d3d;">298.00</div>
<div class="abs t " style="left:1179px;top:407.0px;line-height:20px;font-size:14px;color:#3d3d3d;">1</div>
<div class="abs t " style="left:1280px;top:407.0px;line-height:20px;font-size:14px;color:#3d3d3d;">16</div>
<div class="abs t " style="left:1381px;top:407.0px;line-height:20px;font-size:14px;color:#3d3d3d;">17</div>
<svg class="abs" style="left:1409px;top:411px" width="12" height="12" viewBox="0 0 12 12"><rect x=".7" y="1.7" width="10.6" height="9.6" rx="1.5" fill="none" stroke="#7367f0" stroke-width="1.2"/><path d="M.7 4h10.6M6 5.5v4.5M3.8 7.8h4.4" stroke="#7367f0" stroke-width="1.1"/></svg>
<div class="abs t " style="left:1482px;top:407.0px;line-height:20px;font-size:14px;color:#3d3d3d;letter-spacing:.42px">2023-03-09 17:10:33</div>
<div class="abs" style="left:1657px;top:405px;width:72px;height:24px;background:#f0f9eb;border:1px solid #e8f5e0;border-radius:3px"></div>
<div class="abs t " style="left:1667px;top:409.5px;line-height:18px;font-size:12px;color:#67c23a;">上架中</div>
<svg class="abs" style="left:1710px;top:416px" width="9" height="6" viewBox="0 0 9 6"><path d="M1 1l3.5 3.5L8 1" stroke="#67c23a" stroke-width="1" fill="none"/></svg>
<div class="abs t " style="left:1737px;top:407.0px;line-height:20px;font-size:14px;color:#7367f0;">编辑</div>
<div class="abs t " style="left:1783px;top:407.0px;line-height:20px;font-size:14px;color:#7367f0;">复制</div>
<div class="abs t " style="left:1828px;top:407.0px;line-height:20px;font-size:14px;color:#ea5455;">删除</div>
<div class="abs" style="left:426px;top:458px;width:1459px;height:80px;background:#f7f7f7"></div>
<div class="abs" style="left:581px;top:466px;width:64px;height:64px;border-radius:4px;background:#b9c8d9"><div style="position:absolute;left:0;top:28px;width:64px;text-align:center;font-size:7px;line-height:8px;color:rgba(255,255,255,.35);transform:scaleX(.9)">商品图</div></div>
<div class="abs" style="left:443px;top:490px;width:14px;height:14px;border:1px solid #e2e2e2;border-radius:2px;background:#fff"></div>
<div class="abs t " style="left:486px;top:487.0px;line-height:20px;font-size:14px;color:#3d3d3d;">26</div>
<div class="abs t " style="left:657px;top:466.0px;line-height:20px;font-size:14px;color:#4a4a4a;white-space:nowrap;">SOO行李箱男万向轮拉杆箱耐磨抗摔26英寸A330旅行...</div>
<div class="abs t " style="left:657px;top:485.0px;line-height:18px;font-size:12px;color:#999;white-space:nowrap;">万向轮拉杆箱耐磨抗摔</div>
<div class="abs t " style="left:1027px;top:477.0px;line-height:20px;font-size:14px;color:#3d3d3d;">168.00</div>
<div class="abs" style="left:1027px;top:499px;width:68px;height:20px;background:#7367f0;border-radius:10px"></div>
<div class="abs t " style="left:1033px;top:499.0px;line-height:20px;font-size:12.7px;color:#fff;">多规格</div>
<svg class="abs" style="left:1077px;top:506px" width="9" height="6" viewBox="0 0 9 6"><path d="M1 1l3.5 3.5L8 1" stroke="#fff" stroke-width="1.2" fill="none"/></svg>
<div class="abs t " style="left:1179px;top:487.0px;line-height:20px;font-size:14px;color:#3d3d3d;">5</div>
<div class="abs t " style="left:1280px;top:487.0px;line-height:20px;font-size:14px;color:#3d3d3d;">230</div>
<div class="abs t " style="left:1381px;top:487.0px;line-height:20px;font-size:14px;color:#3d3d3d;">183</div>
<svg class="abs" style="left:1417px;top:491px" width="12" height="12" viewBox="0 0 12 12"><rect x=".7" y="1.7" width="10.6" height="9.6" rx="1.5" fill="none" stroke="#7367f0" stroke-width="1.2"/><path d="M.7 4h10.6M6 5.5v4.5M3.8 7.8h4.4" stroke="#7367f0" stroke-width="1.1"/></svg>
<div class="abs t " style="left:1482px;top:487.0px;line-height:20px;font-size:14px;color:#3d3d3d;letter-spacing:.42px">2023-03-09 17:10:33</div>
<div class="abs" style="left:1657px;top:485px;width:72px;height:24px;background:#f0f9eb;border:1px solid #e8f5e0;border-radius:3px"></div>
<div class="abs t " style="left:1667px;top:489.5px;line-height:18px;font-size:12px;color:#67c23a;">上架中</div>
<svg class="abs" style="left:1710px;top:496px" width="9" height="6" viewBox="0 0 9 6"><path d="M1 1l3.5 3.5L8 1" stroke="#67c23a" stroke-width="1" fill="none"/></svg>
<div class="abs t " style="left:1737px;top:487.0px;line-height:20px;font-size:14px;color:#7367f0;">编辑</div>
<div class="abs t " style="left:1783px;top:487.0px;line-height:20px;font-size:14px;color:#7367f0;">复制</div>
<div class="abs t " style="left:1828px;top:487.0px;line-height:20px;font-size:14px;color:#ea5455;">删除</div>
<div class="abs" style="left:581px;top:546px;width:64px;height:64px;border-radius:4px;background:#abaeb2"><div style="position:absolute;left:0;top:28px;width:64px;text-align:center;font-size:7px;line-height:8px;color:rgba(255,255,255,.35);transform:scaleX(.9)">商品图</div></div>
<div class="abs" style="left:443px;top:570px;width:14px;height:14px;border:1px solid #e2e2e2;border-radius:2px;background:#fff"></div>
<div class="abs t " style="left:486px;top:567.0px;line-height:20px;font-size:14px;color:#3d3d3d;">24</div>
<div class="abs t " style="left:657px;top:546.0px;line-height:20px;font-size:14px;color:#4a4a4a;white-space:nowrap;">【UPF80+】波司登防晒衣2022年夏季防紫外线冰丝...</div>
<div class="abs t " style="left:657px;top:565.0px;line-height:18px;font-size:12px;color:#999;white-space:nowrap;">夏季防紫外线冰丝</div>
<div class="abs t " style="left:1027px;top:557.0px;line-height:20px;font-size:14px;color:#3d3d3d;">349.00</div>
<div class="abs" style="left:1027px;top:579px;width:68px;height:20px;background:#7367f0;border-radius:10px"></div>
<div class="abs t " style="left:1033px;top:579.0px;line-height:20px;font-size:12.7px;color:#fff;">多规格</div>
<svg class="abs" style="left:1077px;top:586px" width="9" height="6" viewBox="0 0 9 6"><path d="M1 1l3.5 3.5L8 1" stroke="#fff" stroke-width="1.2" fill="none"/></svg>
<div class="abs t " style="left:1179px;top:567.0px;line-height:20px;font-size:14px;color:#3d3d3d;">9</div>
<div class="abs t " style="left:1280px;top:567.0px;line-height:20px;font-size:14px;color:#3d3d3d;">255</div>
<div class="abs t " style="left:1381px;top:567.0px;line-height:20px;font-size:14px;color:#3d3d3d;">142</div>
<svg class="abs" style="left:1417px;top:571px" width="12" height="12" viewBox="0 0 12 12"><rect x=".7" y="1.7" width="10.6" height="9.6" rx="1.5" fill="none" stroke="#7367f0" stroke-width="1.2"/><path d="M.7 4h10.6M6 5.5v4.5M3.8 7.8h4.4" stroke="#7367f0" stroke-width="1.1"/></svg>
<div class="abs t " style="left:1482px;top:567.0px;line-height:20px;font-size:14px;color:#3d3d3d;letter-spacing:.42px">2023-03-09 17:10:33</div>
<div class="abs" style="left:1657px;top:565px;width:72px;height:24px;background:#f0f9eb;border:1px solid #e8f5e0;border-radius:3px"></div>
<div class="abs t " style="left:1667px;top:569.5px;line-height:18px;font-size:12px;color:#67c23a;">上架中</div>
<svg class="abs" style="left:1710px;top:576px" width="9" height="6" viewBox="0 0 9 6"><path d="M1 1l3.5 3.5L8 1" stroke="#67c23a" stroke-width="1" fill="none"/></svg>
<div class="abs t " style="left:1737px;top:567.0px;line-height:20px;font-size:14px;color:#7367f0;">编辑</div>
<div class="abs t " style="left:1783px;top:567.0px;line-height:20px;font-size:14px;color:#7367f0;">复制</div>
<div class="abs t " style="left:1828px;top:567.0px;line-height:20px;font-size:14px;color:#ea5455;">删除</div>
<div class="abs" style="left:426px;top:618px;width:1459px;height:80px;background:#f7f7f7"></div>
<div class="abs" style="left:581px;top:626px;width:64px;height:64px;border-radius:4px;background:#9fb39b"><div style="position:absolute;left:0;top:28px;width:64px;text-align:center;font-size:7px;line-height:8px;color:rgba(255,255,255,.35);transform:scaleX(.9)">商品图</div></div>
<div class="abs" style="left:443px;top:650px;width:14px;height:14px;border:1px solid #e2e2e2;border-radius:2px;background:#fff"></div>
<div class="abs t " style="left:486px;top:647.0px;line-height:20px;font-size:14px;color:#3d3d3d;">22</div>
<div class="abs t " style="left:657px;top:626.0px;line-height:20px;font-size:14px;color:#4a4a4a;white-space:nowrap;">猫人男士睡衣男夏季100%纯棉薄款圆领套头短袖套装...</div>
<div class="abs t " style="left:657px;top:645.0px;line-height:18px;font-size:12px;color:#999;white-space:nowrap;">休闲运动可外穿家居服</div>
<div class="abs t " style="left:1027px;top:637.0px;line-height:20px;font-size:14px;color:#3d3d3d;">99.00</div>
<div class="abs" style="left:1027px;top:659px;width:68px;height:20px;background:#7367f0;border-radius:10px"></div>
<div class="abs t " style="left:1033px;top:659.0px;line-height:20px;font-size:12.7px;color:#fff;">多规格</div>
<svg class="abs" style="left:1077px;top:666px" width="9" height="6" viewBox="0 0 9 6"><path d="M1 1l3.5 3.5L8 1" stroke="#fff" stroke-width="1.2" fill="none"/></svg>
<div class="abs t " style="left:1179px;top:647.0px;line-height:20px;font-size:14px;color:#3d3d3d;">13</div>
<div class="abs t " style="left:1280px;top:647.0px;line-height:20px;font-size:14px;color:#3d3d3d;">51</div>
<div class="abs t " style="left:1381px;top:647.0px;line-height:20px;font-size:14px;color:#3d3d3d;">55</div>
<svg class="abs" style="left:1409px;top:651px" width="12" height="12" viewBox="0 0 12 12"><rect x=".7" y="1.7" width="10.6" height="9.6" rx="1.5" fill="none" stroke="#7367f0" stroke-width="1.2"/><path d="M.7 4h10.6M6 5.5v4.5M3.8 7.8h4.4" stroke="#7367f0" stroke-width="1.1"/></svg>
<div class="abs t " style="left:1482px;top:647.0px;line-height:20px;font-size:14px;color:#3d3d3d;letter-spacing:.42px">2023-03-09 17:10:33</div>
<div class="abs" style="left:1657px;top:645px;width:72px;height:24px;background:#f0f9eb;border:1px solid #e8f5e0;border-radius:3px"></div>
<div class="abs t " style="left:1667px;top:649.5px;line-height:18px;font-size:12px;color:#67c23a;">上架中</div>
<svg class="abs" style="left:1710px;top:656px" width="9" height="6" viewBox="0 0 9 6"><path d="M1 1l3.5 3.5L8 1" stroke="#67c23a" stroke-width="1" fill="none"/></svg>
<div class="abs t " style="left:1737px;top:647.0px;line-height:20px;font-size:14px;color:#7367f0;">编辑</div>
<div class="abs t " style="left:1783px;top:647.0px;line-height:20px;font-size:14px;color:#7367f0;">复制</div>
<div class="abs t " style="left:1828px;top:647.0px;line-height:20px;font-size:14px;color:#ea5455;">删除</div>
<div class="abs" style="left:581px;top:706px;width:64px;height:64px;border-radius:4px;background:#7893ae"><div style="position:absolute;left:0;top:28px;width:64px;text-align:center;font-size:7px;line-height:8px;color:rgba(255,255,255,.35);transform:scaleX(.9)">商品图</div></div>
<div class="abs" style="left:443px;top:730px;width:14px;height:14px;border:1px solid #e2e2e2;border-radius:2px;background:#fff"></div>
<div class="abs t " style="left:486px;top:727.0px;line-height:20px;font-size:14px;color:#3d3d3d;">21</div>
<div class="abs t " style="left:657px;top:706.0px;line-height:20px;font-size:14px;color:#4a4a4a;white-space:nowrap;">CACUSS B0520帽子男百搭潮流棒球帽女休闲户外鸭...</div>
<div class="abs t " style="left:657px;top:725.0px;line-height:18px;font-size:12px;color:#999;white-space:nowrap;">百搭潮流棒球帽</div>
<div class="abs t " style="left:1027px;top:717.0px;line-height:20px;font-size:14px;color:#3d3d3d;">69.00</div>
<div class="abs" style="left:1027px;top:739px;width:68px;height:20px;background:#7367f0;border-radius:10px"></div>
<div class="abs t " style="left:1033px;top:739.0px;line-height:20px;font-size:12.7px;color:#fff;">多规格</div>
<svg class="abs" style="left:1077px;top:746px" width="9" height="6" viewBox="0 0 9 6"><path d="M1 1l3.5 3.5L8 1" stroke="#fff" stroke-width="1.2" fill="none"/></svg>
<div class="abs t " style="left:1179px;top:727.0px;line-height:20px;font-size:14px;color:#3d3d3d;">3</div>
<div class="abs t " style="left:1280px;top:727.0px;line-height:20px;font-size:14px;color:#3d3d3d;">20</div>
<div class="abs t " style="left:1381px;top:727.0px;line-height:20px;font-size:14px;color:#3d3d3d;">33</div>
<svg class="abs" style="left:1409px;top:731px" width="12" height="12" viewBox="0 0 12 12"><rect x=".7" y="1.7" width="10.6" height="9.6" rx="1.5" fill="none" stroke="#7367f0" stroke-width="1.2"/><path d="M.7 4h10.6M6 5.5v4.5M3.8 7.8h4.4" stroke="#7367f0" stroke-width="1.1"/></svg>
<div class="abs t " style="left:1482px;top:727.0px;line-height:20px;font-size:14px;color:#3d3d3d;letter-spacing:.42px">2023-03-09 17:10:33</div>
<div class="abs" style="left:1657px;top:725px;width:72px;height:24px;background:#f0f9eb;border:1px solid #e8f5e0;border-radius:3px"></div>
<div class="abs t " style="left:1667px;top:729.5px;line-height:18px;font-size:12px;color:#67c23a;">上架中</div>
<svg class="abs" style="left:1710px;top:736px" width="9" height="6" viewBox="0 0 9 6"><path d="M1 1l3.5 3.5L8 1" stroke="#67c23a" stroke-width="1" fill="none"/></svg>
<div class="abs t " style="left:1737px;top:727.0px;line-height:20px;font-size:14px;color:#7367f0;">编辑</div>
<div class="abs t " style="left:1783px;top:727.0px;line-height:20px;font-size:14px;color:#7367f0;">复制</div>
<div class="abs t " style="left:1828px;top:727.0px;line-height:20px;font-size:14px;color:#ea5455;">删除</div>
<div class="abs" style="left:426px;top:778px;width:1459px;height:80px;background:#f7f7f7"></div>
<div class="abs" style="left:581px;top:786px;width:64px;height:64px;border-radius:4px;background:#d9caaa"><div style="position:absolute;left:0;top:28px;width:64px;text-align:center;font-size:7px;line-height:8px;color:rgba(255,255,255,.35);transform:scaleX(.9)">商品图</div></div>
<div class="abs" style="left:443px;top:810px;width:14px;height:14px;border:1px solid #e2e2e2;border-radius:2px;background:#fff"></div>
<div class="abs t " style="left:486px;top:807.0px;line-height:20px;font-size:14px;color:#3d3d3d;">19</div>
<div class="abs t " style="left:657px;top:786.0px;line-height:20px;font-size:14px;color:#4a4a4a;white-space:nowrap;letter-spacing:.33px;">Apple iPhone 13 Pro Max (A2644) 256GB 苍岭绿色...</div>
<div class="abs t " style="left:657px;top:805.0px;line-height:18px;font-size:12px;color:#999;white-space:nowrap;letter-spacing:.33px;">Apple iPhone 13 Pro Max (A2644) 256GB 苍岭绿色 支持移...</div>
<div class="abs t " style="left:1027px;top:807.0px;line-height:20px;font-size:14px;color:#3d3d3d;">7980.00</div>
<div class="abs t " style="left:1179px;top:807.0px;line-height:20px;font-size:14px;color:#3d3d3d;">1</div>
<div class="abs t " style="left:1280px;top:807.0px;line-height:20px;font-size:14px;color:#3d3d3d;">46</div>
<div class="abs t " style="left:1381px;top:807.0px;line-height:20px;font-size:14px;color:#3d3d3d;">19</div>
<svg class="abs" style="left:1409px;top:811px" width="12" height="12" viewBox="0 0 12 12"><rect x=".7" y="1.7" width="10.6" height="9.6" rx="1.5" fill="none" stroke="#7367f0" stroke-width="1.2"/><path d="M.7 4h10.6M6 5.5v4.5M3.8 7.8h4.4" stroke="#7367f0" stroke-width="1.1"/></svg>
<div class="abs t " style="left:1482px;top:807.0px;line-height:20px;font-size:14px;color:#3d3d3d;letter-spacing:.42px">2023-03-09 17:10:33</div>
<div class="abs" style="left:1657px;top:805px;width:72px;height:24px;background:#f0f9eb;border:1px solid #e8f5e0;border-radius:3px"></div>
<div class="abs t " style="left:1667px;top:809.5px;line-height:18px;font-size:12px;color:#67c23a;">上架中</div>
<svg class="abs" style="left:1710px;top:816px" width="9" height="6" viewBox="0 0 9 6"><path d="M1 1l3.5 3.5L8 1" stroke="#67c23a" stroke-width="1" fill="none"/></svg>
<div class="abs t " style="left:1737px;top:807.0px;line-height:20px;font-size:14px;color:#7367f0;">编辑</div>
<div class="abs t " style="left:1783px;top:807.0px;line-height:20px;font-size:14px;color:#7367f0;">复制</div>
<div class="abs t " style="left:1828px;top:807.0px;line-height:20px;font-size:14px;color:#ea5455;">删除</div>
<div class="abs" style="left:581px;top:866px;width:64px;height:64px;border-radius:4px;background:#d9d3c5"><div style="position:absolute;left:0;top:28px;width:64px;text-align:center;font-size:7px;line-height:8px;color:rgba(255,255,255,.35);transform:scaleX(.9)">商品图</div></div>
<div class="abs t " style="left:657px;top:866.0px;line-height:20px;font-size:14px;color:#4a4a4a;white-space:nowrap;letter-spacing:.33px;">Apple Watch Series 7 智能手表GPS款41 毫米星光色...</div>
<div class="abs" style="left:1877px;top:220px;width:5px;height:530px;background:#dedede;border-radius:3px"></div>
<div class="abs" style="left:245px;top:874px;width:1660px;height:56px;background:#fff;border-radius:4px;box-shadow:0 -3px 10px rgba(0,0,0,.045)"></div>
<div class="abs t " style="left:265px;top:891.0px;line-height:20px;font-size:14px;color:#333;">已选择 0 项</div>
<div class="abs" style="left:350px;top:886px;width:60px;height:31px;background:#f9a8a8;border-radius:4px"></div>
<div class="abs t " style="left:350px;top:891.5px;line-height:20px;font-size:14px;color:#fff;width:60px;text-align:center">删除</div>
<div class="abs" style="left:422px;top:886px;width:60px;height:31px;background:#a8da92;border-radius:4px"></div>
<div class="abs t " style="left:422px;top:891.5px;line-height:20px;font-size:14px;color:#fff;width:60px;text-align:center">上架</div>
<div class="abs" style="left:494px;top:886px;width:60px;height:31px;background:#f9a8a8;border-radius:4px"></div>
<div class="abs t " style="left:494px;top:891.5px;line-height:20px;font-size:14px;color:#fff;width:60px;text-align:center">下架</div>
<div class="abs" style="left:566px;top:886px;width:60px;height:31px;background:#c3c3c6;border-radius:4px"></div>
<div class="abs t " style="left:566px;top:891.5px;line-height:20px;font-size:14px;color:#fff;width:60px;text-align:center">隐藏</div>
<div class="abs t " style="left:1398px;top:892.0px;line-height:20px;font-size:14px;color:#555;">共 22 条</div>
<div class="abs" style="left:1467px;top:886px;width:127px;height:32px;border:1px solid #e0e0e0;border-radius:3px;background:#fff"></div>
<div class="abs t " style="left:1495px;top:892.0px;line-height:20px;font-size:14px;color:#555;">10条/页</div>
<svg class="abs" style="left:1572px;top:899px" width="10" height="6" viewBox="0 0 10 6"><path d="M1 1l4 4 4-4" stroke="#c0c4cc" stroke-width="1.2" fill="none"/></svg>
<svg class="abs" style="left:1623px;top:896px" width="7" height="11" viewBox="0 0 7 11"><path d="M6 1L1.5 5.5 6 10" stroke="#c0c4cc" stroke-width="1.3" fill="none"/></svg>
<div class="abs t " style="left:1656px;top:892.0px;line-height:20px;font-size:14px;color:#7367f0;">1</div>
<div class="abs t " style="left:1687px;top:892.0px;line-height:20px;font-size:14px;color:#333;">2</div>
<div class="abs t " style="left:1719px;top:892.0px;line-height:20px;font-size:14px;color:#333;">3</div>
<svg class="abs" style="left:1751px;top:896px" width="7" height="11" viewBox="0 0 7 11"><path d="M1 1l4.5 4.5L1 10" stroke="#333" stroke-width="1.3" fill="none"/></svg>
<div class="abs t " style="left:1787px;top:892.0px;line-height:20px;font-size:14px;color:#333;">前往</div>
<div class="abs" style="left:1816px;top:891px;width:60px;height:23px;border:1px solid #e6e6e6;border-radius:3px;background:#fff"></div>
<div class="abs t " style="left:1839px;top:892.0px;line-height:20px;font-size:14px;color:#333;">1</div>
<div class="abs" style="left:1860px;top:832px;width:39px;height:41px;background:#fff;border-radius:50%;box-shadow:0 0 6px rgba(0,0,0,.06)"></div>
<svg class="abs" style="left:1873px;top:846px" width="15" height="17" viewBox="0 0 15 17"><path d="M7.5 .5C4.5.5 3 2.8 3 5.5v3.2C3 10 1 11 1 12.3c0 .8.6 1.2 1.5 1.2h10c.9 0 1.5-.4 1.5-1.2C14 11 12 10 12 8.7V5.5C12 2.8 10.5.5 7.5.5z" fill="#7367f0"/><path d="M5 14.2h5L7.5 16.5z" fill="#7367f0"/></svg>
<div class="abs" style="left:1861px;top:886px;width:38px;height:38px;background:#fff;border-radius:50%;box-shadow:0 0 6px rgba(0,0,0,.06)"></div>
<svg class="abs" style="left:1872px;top:896px" width="17" height="17" viewBox="0 0 17 17"><path d="M8.5 .5a8 8 0 0 0-6.8 12.2L.8 16.3l3.8-1A8 8 0 1 0 8.5 .5z" fill="#7367f0"/><circle cx="4.8" cy="8.5" r="1.1" fill="#fff"/><circle cx="8.5" cy="8.5" r="1.1" fill="#fff"/><circle cx="12.2" cy="8.5" r="1.1" fill="#fff"/></svg>
<div class="abs" style="left:1912px;top:112px;width:8px;height:105px;background:#f4f6fa;border-radius:4px 0 0 4px"></div>
<div class="abs" style="left:1916px;top:128px;width:4px;height:86px;background:#4a7ee0;border-radius:3px 0 0 3px"></div>
</body></html>
